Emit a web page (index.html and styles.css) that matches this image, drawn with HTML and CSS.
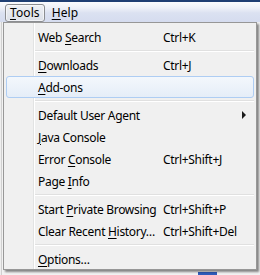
FILE: index.html
```html
<!DOCTYPE html>
<html>
<head>
<meta charset="utf-8">
<link rel="stylesheet" href="styles.css">
</head>
<body>
<div class="menubar">
  <span class="mb-item active"><u>T</u>ools</span>
  <span class="mb-item"><u>H</u>elp</span>
</div>
<div class="backdrop"></div>
<div class="menu">
  <div class="item"><span class="label">Web <u>S</u>earch</span><span class="key">Ctrl+K</span></div>
  <div class="sep"></div>
  <div class="item"><span class="label"><u>D</u>ownloads</span><span class="key">Ctrl+J</span></div>
  <div class="item hover"><span class="label"><u>A</u>dd-ons</span><span class="key"></span></div>
  <div class="sep"></div>
  <div class="item"><span class="label">Default User Agent</span><span class="key"></span><span class="arrow"></span></div>
  <div class="item"><span class="label"><u>J</u>ava Console</span><span class="key"></span></div>
  <div class="item"><span class="label">Error <u>C</u>onsole</span><span class="key">Ctrl+Shift+J</span></div>
  <div class="item"><span class="label">Page <u>I</u>nfo</span><span class="key"></span></div>
  <div class="sep"></div>
  <div class="item"><span class="label">Start <u>P</u>rivate Browsing</span><span class="key">Ctrl+Shift+P</span></div>
  <div class="item"><span class="label">Clear Recent <u>H</u>istory…</span><span class="key">Ctrl+Shift+Del</span></div>
  <div class="sep"></div>
  <div class="item"><span class="label"><u>O</u>ptions…</span><span class="key"></span></div>
</div>
</body>
</html>
```
FILE: styles.css
```css
* { box-sizing: border-box; }
html, body { margin: 0; padding: 0; }
body {
  width: 260px;
  height: 275px;
  overflow: hidden;
  position: relative;
  font-family: "Noto Sans", "DejaVu Sans", sans-serif;
  font-size: 12px;
  color: #000;
  background: #f4f4f4;
}
.menubar {
  height: 22px;
  border-top: 2px solid #1f3f73;
  background: linear-gradient(#fbfcfe 0, #eef1f8 30%, #dbe1f1 55%, #d5dcef 100%);
  display: flex;
  align-items: flex-end;
  padding-left: 5px;
  gap: 2px;
}
.mb-item {
  height: 18px;
  line-height: 15px;
  padding: 0 4px;
  border: 1px solid transparent;
  border-radius: 3px;
  letter-spacing: 0.1px;
}
.mb-item.active {
  border-color: #8c8e92;
  background: linear-gradient(#eef0f4, #dde1e9);
  box-shadow: inset 0 0 0 1px rgba(255,255,255,0.55);
}
.backdrop {
  height: 253px;
  background:
    linear-gradient(#2f5cba, #2f5cba) no-repeat 198px 250px / 19px 3px,
    linear-gradient(to right, #eeeeee 0, #eeeeee 1px, #d0d0d0 1px, #d0d0d0 2px, transparent 2px) no-repeat 0 0 / 3px 100%,
    #f2f2f2;
}
.menu {
  position: absolute;
  left: 3px;
  top: 22px;
  width: 254px;
  height: 248px;
  border: 1px solid #979797;
  padding: 3px 2px 1px;
  background:
    linear-gradient(to right, transparent 29px, #e2e3e3 29px, #e2e3e3 30px, #ffffff 30px, #ffffff 31px, transparent 31px),
    #f0f0f0;
  box-shadow: 2px 2px 2px rgba(0,0,0,0.45);
}
.item {
  height: 22px;
  display: grid;
  grid-template-columns: 125px 1fr 14px;
  align-items: center;
  padding-left: 31px;
  border: 1px solid transparent;
  border-radius: 3px;
  white-space: nowrap;
  letter-spacing: -0.3px;
}
.item.hover {
  border-color: #aecdf3;
  background: linear-gradient(#f3f7fc, #e5edf8);
}
.sep {
  height: 6px;
  margin-left: 29px;
  background:
    linear-gradient(#e0e0e0, #e0e0e0) no-repeat 0 2px / 100% 1px,
    linear-gradient(#ffffff, #ffffff) no-repeat 0 3px / 100% 1px;
}
.arrow {
  width: 0;
  height: 0;
  margin-left: 3px;
  border-top: 4px solid transparent;
  border-bottom: 4px solid transparent;
  border-left: 4px solid #1a1a1a;
}
u { text-decoration-thickness: 1px; text-underline-offset: 2px; }
```
